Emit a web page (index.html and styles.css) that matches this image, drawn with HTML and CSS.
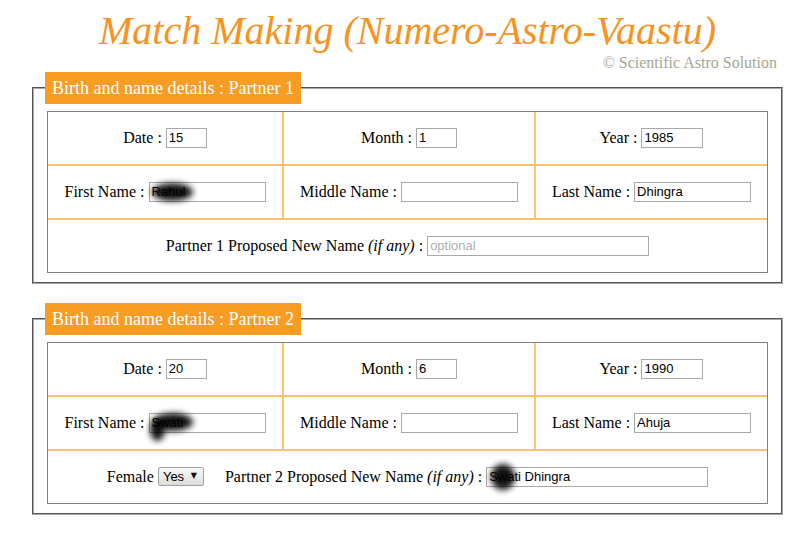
FILE: index.html
```html
<!DOCTYPE html>
<html>
<head>
<meta charset="utf-8">
<title>Match Making</title>
<link rel="stylesheet" href="styles.css">
</head>
<body>
<div class="page">
  <header class="head">
    <h1 class="title">Match Making (Numero-Astro-Vaastu)</h1>
    <div class="sub">© Scientific Astro Solution</div>
  </header>

  <fieldset class="box">
    <legend class="leg">Birth and name details : Partner 1</legend>
    <div class="grid">
      <div class="cell">Date :&nbsp;<input class="inp w-s" type="text" value="15"></div>
      <div class="cell">Month :&nbsp;<input class="inp w-s" type="text" value="1"></div>
      <div class="cell">Year :&nbsp;<input class="inp w-m" type="text" value="1985"></div>
      <div class="cell">First Name :&nbsp;<span class="wrap"><input class="inp w-l" type="text" value="Rahul"><span class="smudge sm-a"></span></span></div>
      <div class="cell">Middle Name :&nbsp;<input class="inp w-l" type="text" value=""></div>
      <div class="cell">Last Name :&nbsp;<input class="inp w-l" type="text" value="Dhingra"></div>
      <div class="cell full">Partner 1 Proposed New Name&nbsp;<i>(if any)</i>&nbsp;:&nbsp;<input class="inp w-xl" type="text" placeholder="optional"></div>
    </div>
  </fieldset>

  <fieldset class="box">
    <legend class="leg">Birth and name details : Partner 2</legend>
    <div class="grid">
      <div class="cell">Date :&nbsp;<input class="inp w-s" type="text" value="20"></div>
      <div class="cell">Month :&nbsp;<input class="inp w-s" type="text" value="6"></div>
      <div class="cell">Year :&nbsp;<input class="inp w-m" type="text" value="1990"></div>
      <div class="cell">First Name :&nbsp;<span class="wrap"><input class="inp w-l" type="text" value="Swati"><span class="smudge sm-b"></span><span class="smudge sm-c"></span></span></div>
      <div class="cell">Middle Name :&nbsp;<input class="inp w-l" type="text" value=""></div>
      <div class="cell">Last Name :&nbsp;<input class="inp w-l" type="text" value="Ahuja"></div>
      <div class="cell full">Female&nbsp;<span class="selwrap"><select class="sel"><option>Yes</option><option>No</option></select><span class="arrow">▼</span></span><span class="gap">Partner 2 Proposed New Name&nbsp;<i>(if any)</i>&nbsp;:&nbsp;</span><span class="wrap"><input class="inp w-xl" type="text" value="Swati Dhingra"><span class="smudge sm-d"></span></span></div>
    </div>
  </fieldset>

  <fieldset class="box">
    <legend class="leg leg-next">Contact details : Phone</legend>
    <div class="grid">
      <div class="cell full">&nbsp;</div>
    </div>
  </fieldset>
</div>
</body>
</html>
```

FILE: styles.css
```css
html, body {
  margin: 0;
  padding: 0;
  background: #ffffff;
}
body {
  font-family: "Liberation Serif", "Times New Roman", serif;
  font-size: 16px;
  color: #000;
}
.page {
  width: 751px;
  padding-left: 32px;
}
.head {
  display: flex;
  flex-direction: column;
}
.title {
  margin: 8px 0 0 0;
  font-family: "Liberation Serif", "Times New Roman", serif;
  font-style: italic;
  font-weight: normal;
  font-size: 40px;
  line-height: 46px;
  color: #f7931e;
  text-align: center;
}
.sub {
  font-size: 16px;
  line-height: 18px;
  color: #a8a690;
  text-align: right;
  padding-right: 6px;
}
.box {
  margin: 0 0 19px 0;
  padding: 7px 13px 9px 13px;
  border: 2px groove #a8a8a8;
  min-width: 0;
  box-sizing: border-box;
  width: 751px;
}
.leg {
  margin-left: -2px;
  padding: 0 7px;
  background: #f99c24;
  color: #ffffff;
  font-size: 18px;
  line-height: 32px;
}
.leg-next {
  margin-left: -1px;
  padding-top: 8px;
  line-height: 24px;
}
.grid {
  display: grid;
  grid-template-columns: 234px 250px 231px;
  grid-auto-rows: 52px;
  gap: 2px;
  background: #ffc26e;
  border: 1px solid #808080;
}
.cell {
  background: #ffffff;
  display: flex;
  align-items: center;
  justify-content: center;
  white-space: nowrap;
  padding-bottom: 1px;
}
.full {
  grid-column: 1 / -1;
}
.inp {
  box-sizing: border-box;
  height: 20px;
  border: 1px solid #a9a9a9;
  padding: 0 2px;
  margin: 0;
  font-family: "Liberation Sans", Arial, sans-serif;
  font-size: 13px;
  color: #000;
  background: #fff;
}
.inp::placeholder {
  color: #b0b0b0;
}
.w-s { width: 41px; }
.w-m { width: 62px; }
.w-l { width: 117px; }
.w-xl { width: 222px; }
.wrap {
  position: relative;
  display: inline-flex;
}
.smudge {
  position: absolute;
  background: #000;
  border-radius: 50%;
  filter: blur(3px);
  opacity: 0.92;
  pointer-events: none;
}
.sm-a { left: 3px; top: 1px; width: 41px; height: 18px; }
.sm-b { left: 4px; top: 0px; width: 40px; height: 18px; }
.sm-c { left: 1px; top: 6px; width: 15px; height: 22px; }
.sm-d { left: 5px; top: -3px; width: 24px; height: 26px; }
.selwrap {
  position: relative;
  display: inline-flex;
}
.sel {
  -webkit-appearance: none;
  appearance: none;
  box-sizing: border-box;
  height: 19px;
  width: 46px;
  margin: 0;
  padding: 0 0 0 4px;
  border: 1px solid #a0a0a0;
  border-radius: 2px;
  background: linear-gradient(#f8f8f8, #dcdcdc);
  font-family: "Liberation Sans", Arial, sans-serif;
  font-size: 13px;
  color: #000;
}
.arrow {
  position: absolute;
  right: 7px;
  top: 3px;
  font-family: "DejaVu Sans", sans-serif;
  font-size: 8px;
  line-height: 12px;
  color: #111;
  pointer-events: none;
}
.gap {
  margin-left: 21px;
}
```
